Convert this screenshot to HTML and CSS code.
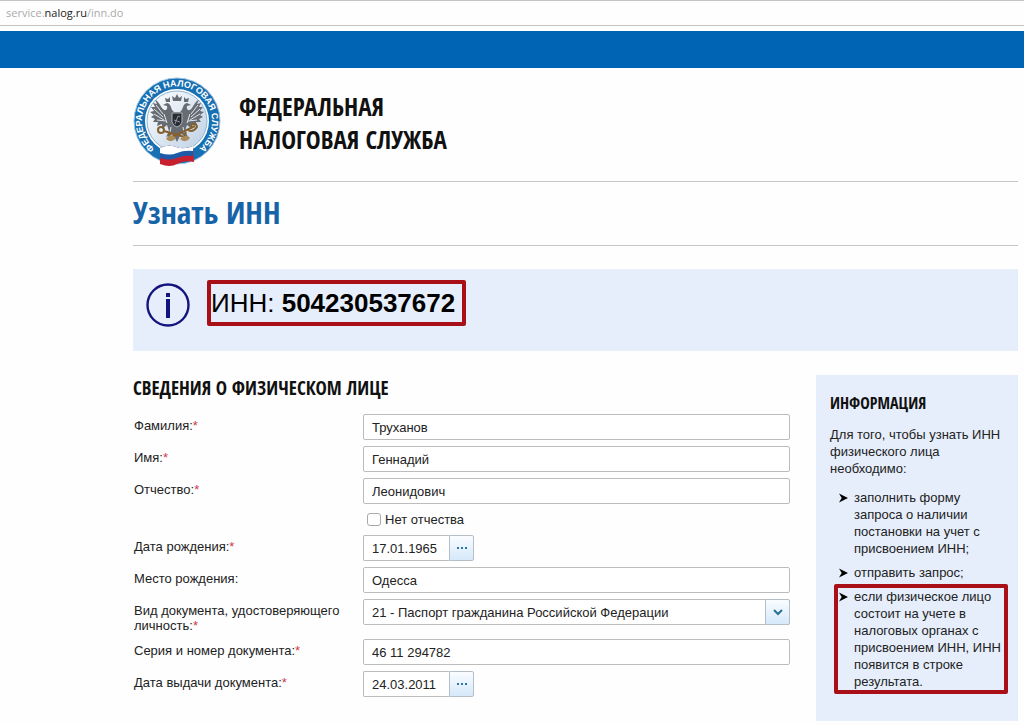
FILE: index.html
```html
<!DOCTYPE html>
<html lang="ru">
<head>
    <meta charset="UTF-8">
    <meta name="viewport" content="width=device-width, initial-scale=1.0">
    <title>Узнать ИНН</title>
    <link rel="stylesheet" href="styles.css">
</head>
<body>
    <div class="address-bar">service.<b>nalog.ru</b>/inn.do</div>
    <div class="top-bar"></div>
    <div class="container">
        <header class="header">
            <svg class="logo" viewBox="0 0 90 90" aria-hidden="true">
                <defs>
                    <path id="ring" d="M22.8 72.2 A35 35 0 1 1 65.2 72.2"/>
                    <linearGradient id="field" x1="0" y1="0" x2="1" y2="1">
                        <stop offset="0" stop-color="#ffffff"/>
                        <stop offset="1" stop-color="#bccfe4"/>
                    </linearGradient>
                </defs>
                <circle cx="44" cy="44" r="43" fill="#1670b3" stroke="#9fc2dd" stroke-width="1"/>
                <circle cx="44" cy="44" r="32" fill="#fff"/>
                <circle cx="44" cy="44" r="30" fill="url(#field)" stroke="#8fb4d3" stroke-width="1"/>
                <text class="logo-text"><textPath href="#ring" startOffset="50%" text-anchor="middle">ФЕДЕРАЛЬНАЯ НАЛОГОВАЯ СЛУЖБА</textPath></text>
                <!-- eagle -->
                <g fill="#676c72">
                    <path d="M41 35 C37 32 39 27 34 26 L30 28 L34 29 C35 33 32 35 29 31 C26 26 24 23 22 23 L24 27 L20 26 L22 30 L18 30 L21 34 L17 35 L21 38 L18 40 L22 42 L20 45 L25 45 L24 49 L29 47 L29 52 L34 48 L36 54 L33 60 L40 57 L44 65 L48 57 L55 60 L52 54 L54 48 L59 52 L59 47 L64 49 L63 45 L68 45 L66 42 L70 40 L67 38 L71 35 L67 34 L70 30 L66 30 L68 26 L64 27 L66 23 C64 23 62 26 59 31 C56 35 53 33 54 29 L58 28 L54 26 C49 27 51 32 47 35 Z"/>
                    <path d="M40 24 L39 19 L42 21 L44 17 L46 21 L49 19 L48 24 Z"/>
                    <path d="M33 25 L32 21 L35 22 L37 20 L37 25 Z M51 25 L51 20 L53 22 L56 21 L55 25 Z"/>
                </g>
                <g fill="none" stroke="#dfe6ed" stroke-width="1">
                    <path d="M23 28 L30 37 M21 32 L30 40 M21 37 L31 43 M24 43 L33 44 M65 28 L58 37 M67 32 L58 40 M67 37 L57 43 M64 43 L55 44"/>
                    <path d="M31 37 L34 46 M57 37 L54 46 M38 50 L37 56 M50 50 L51 56"/>
                </g>
                <path d="M39 36 H49 V45 Q48 49 44 50 Q40 49 39 45 Z" fill="#282d34" stroke="#aab2bb" stroke-width="1"/>
                <path d="M42 47 L45 39 L47 40 M41 43 L47 45" fill="none" stroke="#8d949b" stroke-width="1"/>
                <!-- crossed key and caduceus -->
                <g fill="none" stroke="#84602f" stroke-width="2">
                    <circle cx="28" cy="53" r="3"/>
                    <path d="M31 54 L55 61 M35 62 L62 49 M37 55 L36 60 M41 57 L39 62 M51 60 L53 55"/>
                    <path d="M57 49 Q63 44 64 50 Q60 56 55 53"/>
                </g>
                <path d="M33 62 Q38 55 43 61 Q39 67 33 62 M47 62 Q53 56 57 61 Q53 67 47 62" fill="#a98b59"/>
                <!-- flag -->
                <path d="M27 71 Q35 67 43 70 T60 69 L61 85 Q51 83 44 87 T27 87 Z" fill="#c8202f"/>
                <path d="M27 71 Q35 67 43 70 T60 69 L60 79 Q51 78 44 81 T27 81 Z" fill="#1e5aa8"/>
                <path d="M27 71 Q35 67 43 70 T60 69 L60 74 Q51 73 44 76 T27 76 Z" fill="#fff"/>
            </svg>
            <div class="org-name">ФЕДЕРАЛЬНАЯ<br>НАЛОГОВАЯ СЛУЖБА</div>
        </header>
        <h1>Узнать ИНН</h1>
        <div class="result">
            <svg class="info-icon" viewBox="0 0 44 44" aria-hidden="true">
                <circle cx="22" cy="22" r="20.5" fill="none" stroke="#14147f" stroke-width="2.4"/>
                <path d="M20 10h4v4h-4zM20 16h4v19h-4z" fill="#14147f"/>
            </svg>
            <div class="inn">ИНН: <b>504230537672</b></div>
        </div>
        <div class="content">
            <form class="person-form">
                <h2>СВЕДЕНИЯ О ФИЗИЧЕСКОМ ЛИЦЕ</h2>
                <div class="form-row">
                    <label for="fam">Фамилия:<span class="req">*</span></label>
                    <input type="text" id="fam" value="Труханов">
                </div>
                <div class="form-row">
                    <label for="nam">Имя:<span class="req">*</span></label>
                    <input type="text" id="nam" value="Геннадий">
                </div>
                <div class="form-row">
                    <label for="otch">Отчество:<span class="req">*</span></label>
                    <input type="text" id="otch" value="Леонидович">
                </div>
                <div class="check-row">
                    <input type="checkbox" id="no-otch">
                    <label for="no-otch">Нет отчества</label>
                </div>
                <div class="form-row">
                    <label for="bdate">Дата рождения:<span class="req">*</span></label>
                    <div class="date-field">
                        <input type="text" id="bdate" value="17.01.1965">
                        <button type="button" aria-label="Выбрать дату рождения"><svg viewBox="0 0 12 4"><path d="M1 1h2v2h-2zM5 1h2v2h-2zM9 1h2v2h-2z" fill="#2a76a8"/></svg></button>
                    </div>
                </div>
                <div class="form-row">
                    <label for="bplace">Место рождения:</label>
                    <input type="text" id="bplace" value="Одесса">
                </div>
                <div class="form-row">
                    <label for="doctype">Вид документа, удостоверяющего личность:<span class="req">*</span></label>
                    <div class="select-field">
                        <select id="doctype">
                            <option>21 - Паспорт гражданина Российской Федерации</option>
                        </select>
                        <span class="select-arrow"><svg viewBox="0 0 10 7"><path d="M1 1l4 4 4-4" fill="none" stroke="#2a7095" stroke-width="2"/></svg></span>
                    </div>
                </div>
                <div class="form-row">
                    <label for="docno">Серия и номер документа:<span class="req">*</span></label>
                    <input type="text" id="docno" value="46 11 294782">
                </div>
                <div class="form-row">
                    <label for="docdt">Дата выдачи документа:<span class="req">*</span></label>
                    <div class="date-field">
                        <input type="text" id="docdt" value="24.03.2011">
                        <button type="button" aria-label="Выбрать дату выдачи"><svg viewBox="0 0 12 4"><path d="M1 1h2v2h-2zM5 1h2v2h-2zM9 1h2v2h-2z" fill="#2a76a8"/></svg></button>
                    </div>
                </div>
            </form>
            <aside class="info">
                <h3>ИНФОРМАЦИЯ</h3>
                <p>Для того, чтобы узнать ИНН физического лица необходимо:</p>
                <ul>
                    <li><svg class="marker" viewBox="0 0 10 10"><path d="M0 0L10 5L0 10L3 5z"/></svg>заполнить форму запроса о наличии постановки на учет с присвоением ИНН;</li>
                    <li><svg class="marker" viewBox="0 0 10 10"><path d="M0 0L10 5L0 10L3 5z"/></svg>отправить запрос;</li>
                    <li class="marked"><svg class="marker" viewBox="0 0 10 10"><path d="M0 0L10 5L0 10L3 5z"/></svg>если физическое лицо состоит на учете в налоговых органах с присвоением ИНН, ИНН появится в строке результата.</li>
                </ul>
            </aside>
        </div>
    </div>
</body>
</html>
```
FILE: styles.css
```css
* {
    box-sizing: border-box;
}
body {
    margin: 0;
    font-family: "Liberation Sans", Arial, sans-serif;
    font-size: 13px;
    line-height: 15px;
    color: #222;
    background-color: #fefefe;
}
.address-bar {
    height: 26px;
    padding: 0 6px;
    border-top: 1px solid #c4c4c4;
    border-bottom: 1px solid #c9c4c4;
    font-family: "Open Sans", sans-serif;
    font-size: 11px;
    line-height: 24px;
    color: #aaa;
}
.address-bar b {
    font-weight: normal;
    color: #222;
}
.top-bar {
    height: 37px;
    margin-top: 5px;
    background-color: #0064b4;
}
.container {
    padding: 9px 6px 0 133px;
}
.header {
    display: flex;
    gap: 16px;
    padding-bottom: 14px;
    border-bottom: 1px solid #c6c7cb;
}
.logo {
    width: 90px;
    height: 90px;
    flex-shrink: 0;
}
.logo-text {
    font-family: "Liberation Sans", Arial, sans-serif;
    font-size: 9px;
    font-weight: bold;
    fill: #fff;
}
.org-name, h1, h2, h3 {
    font-family: "Open Sans Condensed", "Roboto Condensed", sans-serif;
    font-weight: bold;
    color: #111;
}
.org-name {
    padding-top: 13px;
    font-size: 25px;
    line-height: 33px;
}
h1 {
    margin: 0;
    padding-bottom: 3px;
    border-bottom: 1px solid #c6c7cb;
    font-size: 31px;
    line-height: 60px;
    color: #1763a8;
}
.result {
    display: flex;
    align-items: flex-start;
    gap: 17px;
    height: 82px;
    margin-top: 23px;
    padding: 11px 13px;
    background-color: #e6eefb;
}
.info-icon {
    width: 44px;
    height: 44px;
    margin-top: 3px;
}
.inn {
    padding: 0 7px 0 0;
    border: 4px solid #a90f17;
    border-radius: 2px;
    font-size: 26px;
    line-height: 38px;
    color: #000;
}
.content {
    display: flex;
    align-items: flex-start;
    gap: 26px;
    margin-top: 24px;
}
.person-form {
    flex: 1;
}
h2 {
    margin: 0 0 13px;
    font-size: 19px;
    line-height: 26px;
}
.form-row {
    display: grid;
    grid-template-columns: 230px 1fr;
    align-items: start;
    margin-bottom: 6px;
}
.form-row > label {
    padding: 4px 12px 0 1px;
}
.req {
    color: #d2384a;
}
input[type="text"], select {
    width: 100%;
    height: 26px;
    padding: 0 8px;
    border: 1px solid #bcbcbc;
    border-radius: 2px;
    background-color: #fff;
    font-family: inherit;
    font-size: 13px;
    color: #222;
}
.check-row {
    display: flex;
    align-items: center;
    gap: 4px;
    height: 19px;
    margin: 0 0 6px 234px;
}
.check-row input {
    appearance: none;
    width: 14px;
    height: 13px;
    margin: 0;
    border: 1px solid #aaa;
    border-radius: 3px;
    background-color: #fff;
}
.date-field {
    display: flex;
    width: 111px;
}
.date-field input[type="text"] {
    flex: 1;
    min-width: 0;
    border-right: none;
    border-radius: 2px 0 0 2px;
}
.date-field button {
    width: 25px;
    height: 26px;
    padding: 0;
    border: 1px solid #b4bfc8;
    border-radius: 0 2px 2px 0;
    background: linear-gradient(#fafdff, #d5e8fa);
    cursor: pointer;
}
.date-field svg {
    display: block;
    width: 12px;
    height: 4px;
    margin: 0 auto;
}
.select-field {
    display: grid;
    grid-template-columns: 1fr 25px;
}
.select-field select {
    grid-row: 1;
    grid-column: 1 / 3;
    appearance: none;
}
.select-arrow {
    display: flex;
    grid-row: 1;
    grid-column: 2;
    align-items: center;
    justify-content: center;
    border: 1px solid #b4bfc8;
    border-radius: 0 2px 2px 0;
    background: linear-gradient(#fafdff, #d5e8fa);
    pointer-events: none;
}
.select-arrow svg {
    width: 10px;
    height: 7px;
}
.info {
    width: 202px;
    padding: 15px 14px 24px;
    background-color: #e6eefb;
    line-height: 17px;
}
h3 {
    margin: 0 0 10px;
    font-size: 16px;
    line-height: 26px;
}
.info p {
    margin: 0;
}
.info ul {
    margin: 12px 0 0;
    padding: 0;
    list-style: none;
}
.info li {
    position: relative;
    margin-bottom: 7px;
    padding-left: 24px;
}
.marker {
    position: absolute;
    top: 4px;
    left: 9px;
    width: 9px;
    height: 10px;
}
.marked::after {
    content: "";
    position: absolute;
    inset: -4px -4px -4px 4px;
    border: 4px solid #a90f17;
    border-radius: 2px;
}
```
